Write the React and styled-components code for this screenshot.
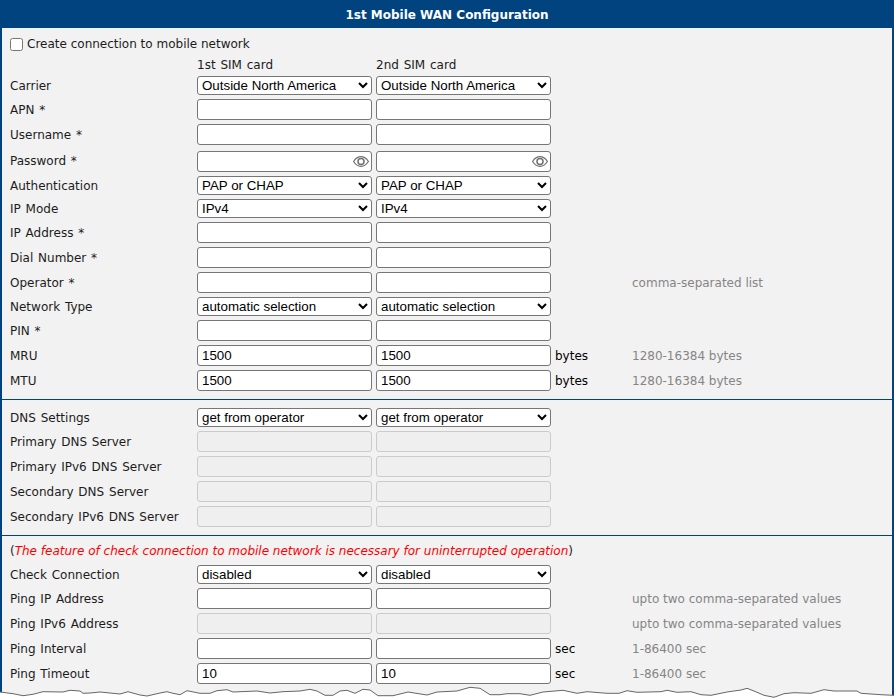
import styled, { createGlobalStyle } from "styled-components";

const GlobalStyle = createGlobalStyle`
  html, body {
    margin: 0;
    padding: 0;
    background: #fff;
  }
`;

const Page = styled.div`
  position: relative;
  width: 894px;
  height: 699px;
  overflow: hidden;
  font-family: "DejaVu Sans", Verdana, sans-serif;
  font-size: 12px;
  color: #1c1c1c;
`;

const Title = styled.h1`
  margin: 0;
  height: 28px;
  line-height: 30px;
  background: #00437f;
  color: #fff;
  font-size: 12px;
  font-weight: 700;
  text-align: center;
`;

const Body = styled.div`
  height: 671px;
  box-sizing: border-box;
  background: #f2f2f2;
  border-left: 2px solid #00437f;
  border-right: 2px solid #00437f;
`;

const Section = styled.section`
  padding: ${(p) => p.$pad || "0"};
  border-bottom: ${(p) => (p.$line ? "1px solid #00437f" : "none")};
`;

const CheckRow = styled.label`
  display: flex;
  align-items: center;
  box-sizing: border-box;
  height: 30px;
  padding: 2px 0 0 8px;

  input {
    width: 13px;
    height: 13px;
    margin: 0 4px 0 0;
  }
`;

const Row = styled.div`
  display: grid;
  grid-template-columns: 183px 175px 175px 73px 1fr;
  column-gap: 4px;
  align-items: center;
  height: ${(p) => p.$h || 25}px;
  padding-left: 8px;
  white-space: nowrap;
`;

const SimHeader = styled(Row)`
  margin-bottom: 2px;
`;

const Label = styled.span`
  word-spacing: 1px;
`;

const Field = styled.div`
  position: relative;
  height: 21px;
  margin-top: ${(p) => (p.$eye ? 2 : 0)}px;
`;

const TextInput = styled.input`
  display: block;
  width: 100%;
  height: 21px;
  box-sizing: border-box;
  padding: 0 4px;
  border: 1px solid ${(p) => (p.disabled ? "#cbcbcb" : "#767676")};
  border-radius: 3px;
  background: ${(p) => (p.disabled ? "#efefef" : "#fff")};
  font: 13.33px "Liberation Sans", Arial, sans-serif;
  color: #000;
`;

const Select = styled.select`
  display: block;
  width: 100%;
  height: 19px;
  box-sizing: border-box;
  padding: 0;
  font: 13.33px "Liberation Sans", Arial, sans-serif;
  color: #000;
  background: #fff;
  border: 1px solid #767676;
  border-radius: 3px;
`;

const Unit = styled.span`
  color: #000;
`;

const Hint = styled.span`
  color: #858585;
`;

const Note = styled.div`
  box-sizing: border-box;
  height: 27px;
  padding: 4px 0 0 8px;
  line-height: 23px;

  em {
    color: #f00;
  }
`;

const EyeButton = styled.svg`
  position: absolute;
  right: 3px;
  top: 2px;
  width: 16px;
  height: 17px;
`;

const Torn = styled.svg`
  position: absolute;
  left: 0;
  bottom: 0;
  display: block;
`;

const Eye = () => (
  <EyeButton viewBox="0 0 16 17" fill="none" stroke="#707070">
    <path d="M.6 8.500C2.600 5.300 5 3.700 8 3.700s5.400 1.600 7.400 4.800c-2 3.200-4.400 4.800-7.400 4.800S2.600 11.700.6 8.500z" strokeWidth="1.200" />
    <circle cx="8" cy="8.500" r="3" strokeWidth="1.500" />
  </EyeButton>
);

// traced from the torn bottom of the page
const edge =
  "0,692 13,693.700 23,695.700 33,694.300 43,691.700 63,692 70,690.300 80,691 83,693.300 90,693 100,692 120,694 128,691.700 140,695 147,696 160,693 167,691.700 173,693.300 180,694.700 187,690.700 200,693.300 210,693.300 217,690.700 227,689.700 233,692 257,691 270,693 283,691.700 300,691 310,689.300 317,691 325,695.300 333,695.300 340,691 347,690.300 355,693.300 363,689.300 370,690 378,695.700 393,695.700 408,692 427,695 437,692 457,691 470,687.300 480,688.300 490,694.700 500,694.700 507,693.700 520,693.700 530,695.300 543,692 563,690.300 577,693.300 587,691.700 607,693.300 619,693.300 627,690.700 637,692.300 661,691.700 667,690.300 677,692.300 691,691.700 701,694.700 711,695.300 727,692 741,690 747,688.300 754,691 764,695.300 774,697.300 784,693.700 794,692.700 811,693.300 824,689.700 834,691 857,691 861,693.300 881,694.700 894,695.300";

const TornEdge = () => (
  <Torn width="894" height="14" viewBox="0 685 894 14">
    <polygon points={`${edge} 894,699 0,699`} fill="#fff" />
    <polyline points={edge} fill="none" stroke="#666" strokeWidth="1" />
  </Torn>
);

const FormRow = ({ label, kind = "input", a = "", b = "", unit, hint, h, eye, disabled }) => (
  <Row $h={h}>
    <Label>{label}</Label>
    {[a, b].map((value, i) =>
      kind === "select" ? (
        <Select key={i} defaultValue={value}>
          <option>{value}</option>
        </Select>
      ) : (
        <Field key={i} $eye={eye}>
          <TextInput defaultValue={value} disabled={disabled} />
          {eye && <Eye />}
        </Field>
      )
    )}
    <Unit>{unit}</Unit>
    <Hint>{hint}</Hint>
  </Row>
);

const same = (kind, value, rest = {}) => ({ kind, a: value, b: value, ...rest });

export default function App() {
  return (
    <Page>
      <GlobalStyle />
      <Title>1st Mobile WAN Configuration</Title>
      <Body>
        <Section $line $pad="0 0 6px">
          <CheckRow>
            <input type="checkbox" />
            Create connection to mobile network
          </CheckRow>
          <SimHeader $h={14}>
            <span />
            <Label>1st SIM card</Label>
            <Label>2nd SIM card</Label>
          </SimHeader>
          <FormRow label="Carrier" h={23} {...same("select", "Outside North America")} />
          <FormRow label="APN *" />
          <FormRow label="Username *" />
          <FormRow label="Password *" eye h={27} />
          <FormRow label="Authentication" h={23} {...same("select", "PAP or CHAP")} />
          <FormRow label="IP Mode" h={23} {...same("select", "IPv4")} />
          <FormRow label="IP Address *" />
          <FormRow label="Dial Number *" />
          <FormRow label="Operator *" hint="comma-separated list" />
          <FormRow label="Network Type" h={23} {...same("select", "automatic selection")} />
          <FormRow label="PIN *" />
          <FormRow label="MRU" {...same("input", "1500")} unit="bytes" hint="1280-16384 bytes" />
          <FormRow label="MTU" {...same("input", "1500")} unit="bytes" hint="1280-16384 bytes" />
        </Section>
        <Section $line $pad="6px 0 6px">
          <FormRow label="DNS Settings" h={23} {...same("select", "get from operator")} />
          <FormRow label="Primary DNS Server" disabled />
          <FormRow label="Primary IPv6 DNS Server" disabled />
          <FormRow label="Secondary DNS Server" disabled />
          <FormRow label="Secondary IPv6 DNS Server" disabled />
        </Section>
        <Section>
          <Note>
            (<em>The feature of check connection to mobile network is necessary for uninterrupted operation</em>)
          </Note>
          <FormRow label="Check Connection" h={23} {...same("select", "disabled")} />
          <FormRow label="Ping IP Address" hint="upto two comma-separated values" />
          <FormRow label="Ping IPv6 Address" disabled hint="upto two comma-separated values" />
          <FormRow label="Ping Interval" unit="sec" hint="1-86400 sec" />
          <FormRow label="Ping Timeout" {...same("input", "10")} unit="sec" hint="1-86400 sec" />
        </Section>
      </Body>
      <TornEdge />
    </Page>
  );
}
